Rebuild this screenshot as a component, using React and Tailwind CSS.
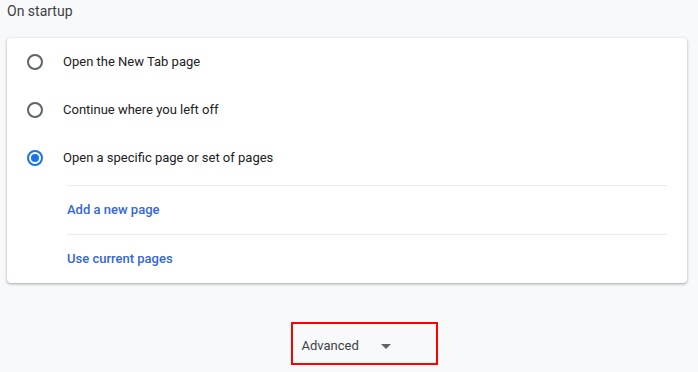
export default function App() {
  const options = [
    { label: "Open the New Tab page", checked: false },
    { label: "Continue where you left off", checked: false },
    { label: "Open a specific page or set of pages", checked: true },
  ];
  const links = ["Add a new page", "Use current pages"];

  return (
    <div
      className="w-[698px] h-[372px] overflow-hidden bg-[#f8f9fa] text-[#202124]"
      style={{ fontFamily: "Roboto, 'Liberation Sans', sans-serif" }}
    >
      <div className="h-[22px] pl-[7px] text-[14px] leading-[22px] text-[#3c4043]">On startup</div>
      <div className="mt-[16px] ml-[7px] w-[680px] rounded-[4px] bg-white shadow-[0_1px_2px_rgba(60,64,67,0.3),0_1px_3px_1px_rgba(60,64,67,0.12)]">
        <div className="mb-[3px]">
          {options.map((o) => (
            <div key={o.label} className="flex h-[48px] items-center pl-[20px]">
              {o.checked ? (
                <span className="flex h-[16px] w-[16px] items-center justify-center rounded-full border-2 border-[#1a73e8]">
                  <span className="h-[8px] w-[8px] rounded-full bg-[#1a73e8]" />
                </span>
              ) : (
                <span className="h-[16px] w-[16px] rounded-full border-2 border-[#5f6368]" />
              )}
              <span className="ml-[20px] text-[13px]">{o.label}</span>
            </div>
          ))}
        </div>
        <div className="pl-[60px] pr-[20px]">
          {links.map((l) => (
            <div
              key={l}
              className="flex h-[49px] items-center border-t border-[#e8eaed] text-[13px] font-medium text-[#3367d6]"
            >
              {l}
            </div>
          ))}
        </div>
      </div>
      <div className="mt-[39px] flex justify-center">
        <div className="ml-[30px] flex h-[43px] w-[147px] items-center border-2 border-[#ff0000] pl-[9px] pt-[5px]">
          <span className="text-[13px] text-[#3c4043]">Advanced</span>
          <svg className="ml-[22px]" width="10" height="5" viewBox="0 0 10 5">
            <path d="M0 0 L10 0 L5 5 Z" fill="#5f6368" />
          </svg>
        </div>
      </div>
    </div>
  );
}
